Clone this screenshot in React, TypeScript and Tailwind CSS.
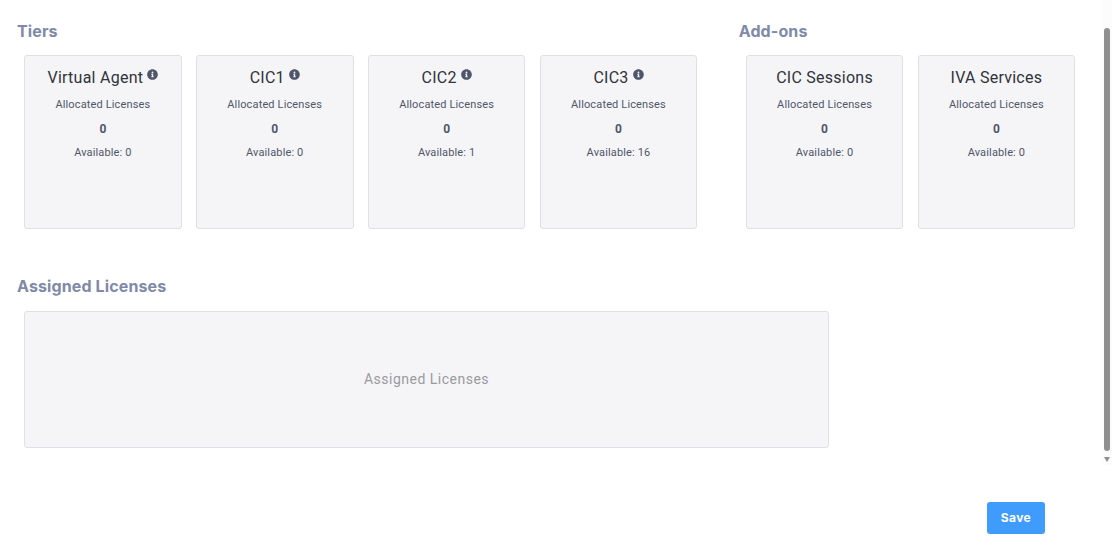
import { FaInfoCircle } from "react-icons/fa";

type LicenseCardProps = {
  title: string;
  available: number;
  info?: boolean;
};

function LicenseCard({ title, available, info }: LicenseCardProps) {
  return (
    <div className="h-[174px] w-[157.7px] shrink-0 rounded-[3px] border border-[#dfe0e3] bg-[#f5f5f7] pt-[10px] text-center font-['Roboto',sans-serif]">
      <div className="flex h-[24px] items-start justify-center text-[16px] leading-[24px] tracking-[0.25px] text-[#30333b]">
        <span>{title}</span>
        {info && <FaInfoCircle className="ml-[4px] mt-[3px] h-[11px] w-[11px] text-[#50566a]" aria-hidden="true" />}
      </div>
      <div className="mt-[7px] text-[11px] leading-[16px] tracking-[0.14px] text-[#50566a]">Allocated Licenses</div>
      <div className="mt-[8px] text-[12px] font-bold leading-[16px] text-[#50566a]">0</div>
      <div className="mt-[8px] text-[11px] leading-[16px] tracking-[0.14px] text-[#50566a]">Available: {available}</div>
    </div>
  );
}

function SectionTitle({ children }: { children: string }) {
  return (
    <h2 className="font-['Inter',sans-serif] text-[16px] font-bold leading-[24px] tracking-[0.12px] text-[#8089a8]">
      {children}
    </h2>
  );
}

export default function App() {
  return (
    <div className="flex h-[549px] w-[1112px] overflow-hidden bg-white">
      <main className="w-[1102px] shrink-0 pl-[17px] pt-[19px]">
        <div className="flex">
          <section className="w-[721.7px] shrink-0">
            <SectionTitle>Tiers</SectionTitle>
            <div className="ml-[7px] mt-[12px] flex gap-[14.2px]">
              <LicenseCard title="Virtual Agent" available={0} info />
              <LicenseCard title="CIC1" available={0} info />
              <LicenseCard title="CIC2" available={1} info />
              <LicenseCard title="CIC3" available={16} info />
            </div>
          </section>
          <section>
            <SectionTitle>Add-ons</SectionTitle>
            <div className="ml-[7px] mt-[12px] flex gap-[14.2px]">
              <LicenseCard title="CIC Sessions" available={0} />
              <LicenseCard title="IVA Services" available={0} />
            </div>
          </section>
        </div>

        <section className="mt-[45px]">
          <SectionTitle>Assigned Licenses</SectionTitle>
          <div className="ml-[7px] mt-[13px] flex h-[137px] w-[805px] items-center justify-center rounded-[3px] border border-[#dfe0e3] bg-[#f5f5f7] font-['Roboto',sans-serif] text-[14px] tracking-[0.5px] text-[#9a9a9f]">
            Assigned Licenses
          </div>
        </section>

        <div className="mt-[54px] flex justify-end pr-[57px]">
          <button
            type="button"
            className="h-[32px] w-[58px] rounded-[3px] bg-[#3f9bfc] font-['Inter',sans-serif] text-[12px] font-bold tracking-[0.4px] text-white"
          >
            Save
          </button>
        </div>
      </main>

      <div className="flex h-[465px] w-[10px] shrink-0 flex-col bg-[#fcfcfc] pl-[2px] pt-[28px]">
        <div className="h-[423px] w-[6px] rounded-[3px] bg-[#8f8f8f]" />
        <svg className="mt-[6px]" width="6" height="5" viewBox="0 0 6 5" aria-hidden="true">
          <path d="M0 0h6L3 5z" fill="#8f8f8f" />
        </svg>
      </div>
    </div>
  );
}
